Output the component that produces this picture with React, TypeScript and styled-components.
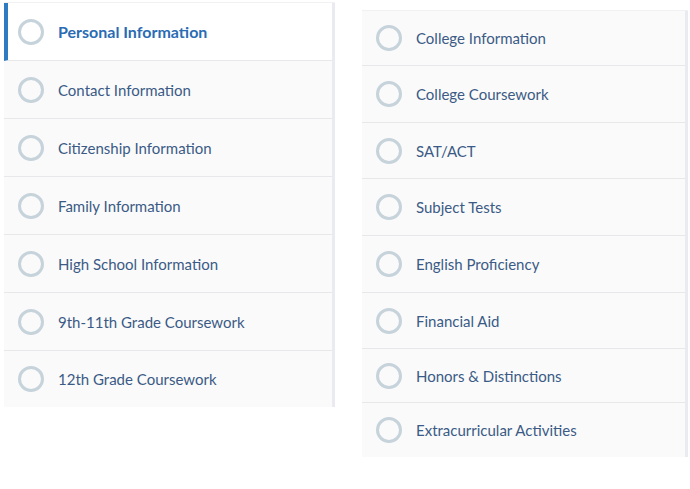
import styled, { createGlobalStyle } from "styled-components";

const GlobalStyle = createGlobalStyle`
  html, body {
    margin: 0;
    padding: 0;
    background: #ffffff;
  }
  body {
    font-family: Lato, "Source Sans Pro", "Open Sans", sans-serif;
  }
`;

const Page = styled.div`
  display: flex;
  align-items: flex-start;
  padding-left: 4px;
  width: 690px;
  height: 489px;
  box-sizing: border-box;
`;

const Panel = styled.ul<{ $top: number; $width: number; $left: number }>`
  list-style: none;
  margin: ${(p) => p.$top}px 0 0 ${(p) => p.$left}px;
  padding: 0;
  width: ${(p) => p.$width}px;
  background: #fafafa;
  border-right: 3px solid #e9ebf0;
  box-shadow: 0 -1px 0 #f1f1f3;
`;

const Item = styled.li<{ $h: number; $active?: boolean }>`
  display: flex;
  align-items: center;
  gap: 14px;
  height: ${(p) => p.$h}px;
  box-sizing: border-box;
  padding-left: ${(p) => (p.$active ? 10 : 14)}px;
  background: ${(p) => (p.$active ? "#ffffff" : "#fafafa")};
  border-left: ${(p) => (p.$active ? "4px solid #2e7bc1" : "none")};
  border-bottom: 1px solid #e8e8ea;

  &:last-child {
    border-bottom: none;
  }
`;

const Circle = styled.span`
  flex: none;
  width: 26px;
  height: 26px;
  box-sizing: border-box;
  border-radius: 50%;
  border: 3px solid #c6d3db;
`;

const Label = styled.span<{ $active?: boolean }>`
  font-size: ${(p) => (p.$active ? 16 : 15)}px;
  font-weight: ${(p) => (p.$active ? 700 : 400)};
  color: ${(p) => (p.$active ? "#2a6cb3" : "#3b5b86")};
  white-space: nowrap;
`;

const leftItems = [
  "Personal Information",
  "Contact Information",
  "Citizenship Information",
  "Family Information",
  "High School Information",
  "9th-11th Grade Coursework",
  "12th Grade Coursework",
];

const rightItems: [string, number][] = [
  ["College Information", 55],
  ["College Coursework", 57],
  ["SAT/ACT", 56],
  ["Subject Tests", 57],
  ["English Proficiency", 57],
  ["Financial Aid", 56],
  ["Honors & Distinctions", 54],
  ["Extracurricular Activities", 54],
];

export default function App() {
  return (
    <>
      <GlobalStyle />
      <Page>
        <Panel $top={3} $left={0} $width={328}>
          {leftItems.map((label, i) => (
            <Item key={label} $h={i === 6 ? 56 : 58} $active={i === 0}>
              <Circle />
              <Label $active={i === 0}>{label}</Label>
            </Item>
          ))}
        </Panel>
        <Panel $top={11} $left={27} $width={323}>
          {rightItems.map(([label, h]) => (
            <Item key={label} $h={h}>
              <Circle />
              <Label>{label}</Label>
            </Item>
          ))}
        </Panel>
      </Page>
    </>
  );
}
